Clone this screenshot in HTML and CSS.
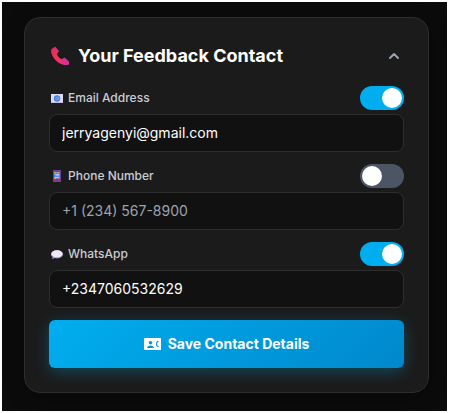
FILE: index.html
```html
<!DOCTYPE html>
<html lang="en">
<head>
<meta charset="utf-8">
<meta name="viewport" content="width=device-width, initial-scale=1">
<title>Your Feedback Contact</title>
<link rel="stylesheet" href="styles.css">
</head>
<body>
<main class="page">
  <form class="card">
    <header class="card-header">
      <svg class="title-icon" viewBox="0 0 20 20" aria-hidden="true">
        <defs>
          <linearGradient id="handset" x1="0" y1="0" x2="1" y2="1">
            <stop offset="0" stop-color="#e02a58"/>
            <stop offset=".5" stop-color="#f8315e"/>
            <stop offset="1" stop-color="#d02da8"/>
          </linearGradient>
        </defs>
        <path fill="url(#handset)" d="M1.3 3.2 4.6 1 8.6 5.6 7 8c.5 2.3 2.700 4.600 5 5.300l2-1.500L19 16.200V18.400C15 20 9.500 18.300 6 14.500 2.500 11 .6 6.500 1.300 3.200Z"/>
        <path fill="#b93a9c" d="M4.200 1.200 5.200.8 9 5 8 6.200ZM13.500 12.300l1.200-.9 4.500 4.300-.4 1.200Z"/>
      </svg>
      <h1 class="title">Your Feedback Contact</h1>
      <button class="collapse" type="button" aria-label="Collapse">
        <svg class="chevron" viewBox="0 0 12 12" aria-hidden="true"><path d="M2 8 6 4l4 4"/></svg>
      </button>
    </header>

    <div class="field">
      <div class="field-head">
        <label class="label" for="email">
          <svg class="label-icon" viewBox="0 0 14 14" aria-hidden="true">
            <path fill="#e3d8f2" d="M1 3h12v9H1z"/>
            <path fill="#c9b6e4" d="M1 11h12v1H1z"/>
            <circle cx="7" cy="7.500" r="3.200" fill="#3f86e0"/>
            <circle cx="7" cy="7.500" r="1.300" fill="none" stroke="#8fb4ea" stroke-width=".7"/>
            <path d="M8.400 6.300v1.500q.6 1 1.100-.3" fill="none" stroke="#8fb4ea" stroke-width=".6"/>
          </svg>
          Email Address
        </label>
        <input class="switch" type="checkbox" aria-label="Use email address" checked>
      </div>
      <input class="input" id="email" type="email" value="jerryagenyi@gmail.com">
    </div>

    <div class="field">
      <div class="field-head">
        <label class="label" for="phone">
          <svg class="label-icon" viewBox="0 0 14 14" aria-hidden="true">
            <path fill="#6247a6" d="M3 1h8v12H3z"/>
            <path fill="#7b3f8c" d="M3 11h8v2H3z"/>
            <path fill="#4f8fe0" d="M4 3h6v7H4z"/>
            <path fill="#f59a3c" d="M4 3h2v1H4zM7 3h2v1H7zM6 6h3v1H6zM4 9h2v1H4z"/>
            <path fill="#e8507a" d="M4 6h2v1H4zM7 9h2v1H7z"/>
            <path fill="#a9c8ee" d="M5 5h4v1H5zM5 8h4v1H5z"/>
          </svg>
          Phone Number
        </label>
        <input class="switch" type="checkbox" aria-label="Use phone number">
      </div>
      <input class="input" id="phone" type="tel" placeholder="+1 (234) 567-8900">
    </div>

    <div class="field">
      <div class="field-head">
        <label class="label" for="whatsapp">
          <svg class="label-icon" viewBox="0 0 14 14" aria-hidden="true">
            <path fill="#b9a5d8" d="M7 3.200c3.500 0 6 1.700 6 4s-2.500 4-6 4c-.8 0-1.500 0-2.200-.2L2 12l.8-1.900C1.700 9.400 1 8.400 1 7.200c0-2.300 2.500-4 6-4Z"/>
            <ellipse cx="7" cy="6.700" rx="5.500" ry="3.500" fill="#efe8f8"/>
          </svg>
          WhatsApp
        </label>
        <input class="switch" type="checkbox" aria-label="Use WhatsApp" checked>
      </div>
      <input class="input" id="whatsapp" type="tel" value="+2347060532629">
    </div>

    <button class="save" type="submit">
      <svg class="save-icon" viewBox="0 0 17 12" aria-hidden="true">
        <path fill="#fff" d="M.5 0h16q.5 0 .5.500v11q0 .5-.5.500H.5Q0 12 0 11.500V.5Q0 0 .5 0Z"/>
        <circle cx="6.500" cy="4.700" r="1.800" fill="#0496dc"/>
        <path fill="#0496dc" d="M3 10V9.400Q4 7.600 6.500 7.600T10 9.400v.6Z"/>
        <path d="M14.600 3.500h-1.200q-1.800 2.500 0 5h1.200" fill="none" stroke="#0496dc" stroke-width="1.100"/>
      </svg>
      Save Contact Details
    </button>
  </form>
</main>
</body>
</html>
```

FILE: styles.css
```css
* {
  box-sizing: border-box;
}

body {
  margin: 0;
  padding: 2px;
  background: #fff;
  font-family: Inter, "Liberation Sans", sans-serif;
}

.page {
  padding: 15px 18px 18px 22px;
  background: #0b0b0b;
}

.card {
  display: flex;
  flex-direction: column;
  gap: 12px;
  padding: 24px;
  border: 1px solid #2e2e2e;
  border-radius: 16px;
  background: #1b1b1b;
  box-shadow: 0 4px 20px rgba(0, 0, 0, 0.3);
}

.card-header {
  display: flex;
  align-items: center;
  gap: 8px;
  height: 28px;
  margin-bottom: 4px;
  padding-left: 1px;
}

.title-icon {
  width: 20px;
  height: 20px;
}

.title {
  flex: 1;
  margin: 0;
  color: #fff;
  font-size: 18px;
  font-weight: 700;
  line-height: 28px;
}

.collapse {
  display: flex;
  padding: 4px;
  border: 0;
  background: none;
}

.chevron {
  width: 12px;
  height: 12px;
  fill: none;
  stroke: #9ca3af;
  stroke-width: 2;
  stroke-linecap: round;
  stroke-linejoin: round;
}

.field {
  display: flex;
  flex-direction: column;
  gap: 4px;
}

.field-head {
  display: flex;
  align-items: center;
  justify-content: space-between;
}

.label {
  display: flex;
  align-items: center;
  gap: 4px;
  padding-left: 1px;
  color: #c9cdd3;
  font-size: 12px;
  font-weight: 500;
  line-height: 16px;
}

.label-icon {
  width: 14px;
  height: 14px;
}

.switch {
  display: flex;
  width: 44px;
  height: 24px;
  margin: 0;
  padding: 2px;
  border-radius: 12px;
  background: #4b5563;
  appearance: none;
}

.switch::before {
  width: 20px;
  height: 20px;
  border-radius: 50%;
  background: #fff;
  content: "";
}

.switch:checked {
  justify-content: flex-end;
  background: #00aeef;
}

.input {
  width: 100%;
  height: 38px;
  padding: 7px 12px 9px;
  border: 1px solid #2e2e2e;
  border-radius: 8px;
  background: #111;
  color: #fff;
  font-family: inherit;
  font-size: 14px;
  font-weight: 400;
  line-height: 20px;
}

.input::placeholder {
  color: #9ca3af;
  opacity: 1;
}

.save {
  display: flex;
  align-items: center;
  justify-content: center;
  gap: 7px;
  height: 48px;
  border: 0;
  border-radius: 6px;
  background: linear-gradient(135deg, #00aeef, #0088cc);
  box-shadow: 0 4px 15px rgba(0, 174, 239, 0.3);
  color: #fff;
  font-family: inherit;
  font-size: 14px;
  font-weight: 700;
  line-height: 20px;
}

.save-icon {
  width: 17px;
  height: 12px;
}
```
